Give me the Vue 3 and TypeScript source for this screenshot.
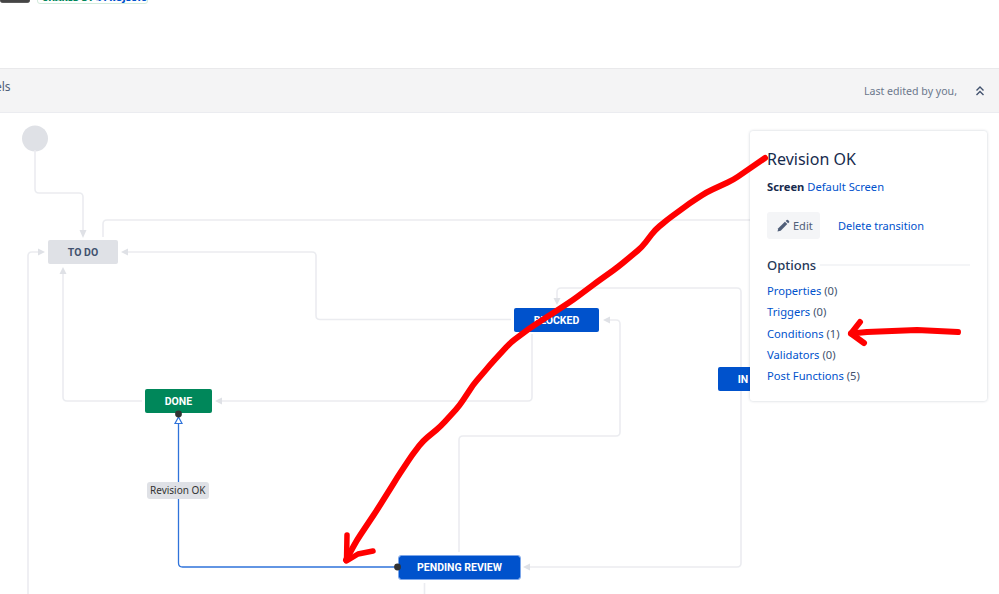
<script setup lang="ts">
type Pt = [number, number]

interface FlowNode {
  label: string
  kind: string
  x: number
  y: number
  w: number
  h: number
}

const CANVAS_TOP = 113

const nodes: FlowNode[] = [
  { label: 'TO DO', kind: 'todo', x: 48, y: 240, w: 70, h: 24 },
  { label: 'DONE', kind: 'done', x: 145, y: 389, w: 67, h: 24 },
  { label: 'BLOCKED', kind: 'progress', x: 514, y: 308, w: 85, h: 24 },
  { label: 'IN PROGRESS', kind: 'progress', x: 718, y: 367, w: 106, h: 24 },
  { label: 'PENDING REVIEW', kind: 'progress selected', x: 399, y: 556, w: 121, h: 23 },
]

const edgeLines: Pt[][] = [
  [[35, 150], [35, 193], [83, 193], [83, 231]],
  [[103, 237], [103, 220], [760, 220]],
  [[28, 600], [28, 252], [39, 252]],
  [[128, 252], [316, 252], [316, 319.5], [511, 319.5]],
  [[63, 273], [63, 401], [142, 401]],
  [[221, 401], [532, 401], [532, 334]],
  [[557, 299], [557, 288], [741, 288], [741, 567], [530, 567]],
  [[609, 320], [620, 320], [620, 436], [459, 436], [459, 552]],
  [[424.5, 583], [424.5, 600]],
]

const arrows: string[] = [
  '83,238 79.5,230 86.5,230',
  '45,252 38,248.5 38,255.5',
  '121,252 128,248.5 128,255.5',
  '63,267 59.5,274 66.5,274',
  '215,401 222,397.5 222,404.5',
  '557,305 553.5,298 560.5,298',
  '603,320 610,316.5 610,323.5',
  '523,567 530,563.5 530,570.5',
]

const optionRows = [
  { name: 'Properties', count: 0 },
  { name: 'Triggers', count: 0 },
  { name: 'Conditions', count: 1 },
  { name: 'Validators', count: 0 },
  { name: 'Post Functions', count: 5 },
]

const scribble: Pt[] = [
  [765, 158], [733, 180], [707, 192], [690, 203], [667, 220], [655, 230], [642, 247],
  [618, 267], [597, 282], [573, 300], [547, 317], [530, 328], [510, 343], [490, 365],
  [473, 385], [460, 405], [441, 426], [423, 441], [412, 455], [397, 478], [377, 510],
  [357, 540], [346, 560],
]

function rounded(points: Pt[], r = 4): string {
  let d = `M${points[0][0]} ${points[0][1]}`
  for (let i = 1; i < points.length - 1; i++) {
    const [px, py] = points[i - 1]
    const [x, y] = points[i]
    const [nx, ny] = points[i + 1]
    const inLen = Math.hypot(x - px, y - py) || 1
    const outLen = Math.hypot(nx - x, ny - y) || 1
    const ax = x - ((x - px) / inLen) * r
    const ay = y - ((y - py) / inLen) * r
    const bx = x + ((nx - x) / outLen) * r
    const by = y + ((ny - y) / outLen) * r
    d += ` L${ax} ${ay} Q${x} ${y} ${bx} ${by}`
  }
  const last = points[points.length - 1]
  return `${d} L${last[0]} ${last[1]}`
}

const edgePaths = edgeLines.map((line) => rounded(line))
const selectedPath = rounded([[398, 567], [178.5, 567], [178.5, 423]])
const scribblePath = rounded(scribble, 6)

function nodeBox(node: FlowNode) {
  return {
    left: `${node.x}px`,
    top: `${node.y - CANVAS_TOP}px`,
    width: `${node.w}px`,
    height: `${node.h}px`,
  }
}
</script>

<template>
  <div class="page">
    <div class="top">
      <span class="lozenge dark">ACTIVE</span>
      <span class="lozenge shared"><b class="green">SHARED BY</b>&nbsp;<b class="blue">4 PROJECTS</b></span>
    </div>

    <header class="bar">
      <span class="bar-left">els</span>
      <div class="bar-right">
        <span>Last edited by you,</span>
        <svg class="chev" width="12" height="12" viewBox="0 0 12 12" fill="none" stroke="#42526e" stroke-width="1.4">
          <path d="M2.5 5.5 6 2l3.5 3.5" />
          <path d="M2.5 10 6 6.5 9.5 10" />
        </svg>
      </div>
    </header>

    <main class="canvas">
      <svg class="graph" width="999" height="481" viewBox="0 113 999 481" fill="none">
        <circle cx="35" cy="138.5" r="13" fill="#dfe1e6" />
        <path v-for="(d, i) in edgePaths" :key="i" :d="d" stroke="#ebecf0" stroke-width="1.6" />
        <polygon v-for="p in arrows" :key="p" :points="p" fill="#dfe1e6" />
        <path :d="selectedPath" stroke="#2f73da" stroke-width="1.3" />
      </svg>

      <div
        v-for="node in nodes"
        :key="node.label"
        class="node"
        :class="node.kind"
        :style="nodeBox(node)"
      >{{ node.label }}</div>

      <svg class="graph over" width="999" height="481" viewBox="0 113 999 481" fill="none">
        <polygon points="178.5,417 175,423.5 182,423.5" fill="#fff" stroke="#2f73da" stroke-width="1.2" />
        <circle cx="178.5" cy="414" r="3.4" fill="#333" />
        <circle cx="397.5" cy="567" r="3.4" fill="#333" />
      </svg>

      <span class="edge-label">Revision OK</span>

      <aside class="panel">
        <h2 class="title">Revision OK</h2>
        <p class="screen"><b>Screen</b> <a>Default Screen</a></p>
        <div class="actions">
          <button class="edit" type="button">
            <svg width="14" height="14" viewBox="0 0 14 14" fill="#505f79">
              <path d="M1.5 12.5l.8-3.2 6.6-6.6 2.4 2.4-6.6 6.6z" />
              <path d="M9.7 1.9l.9-.9a1 1 0 0 1 1.4 0l1 1a1 1 0 0 1 0 1.4l-.9.9z" />
            </svg>
            Edit
          </button>
          <a class="delete">Delete transition</a>
        </div>
        <div class="options-head">
          <span>Options</span>
          <i class="rule"></i>
        </div>
        <ul class="options">
          <li v-for="row in optionRows" :key="row.name"><a>{{ row.name }}</a> ({{ row.count }})</li>
        </ul>
      </aside>
    </main>

    <svg class="ink" width="999" height="594" viewBox="0 0 999 594" fill="none" stroke="#ff0000" stroke-linecap="round" stroke-linejoin="round">
      <path :d="scribblePath" stroke-width="6" />
      <path d="M347 535 346.5 561 358 554 373 551" stroke-width="5.5" />
      <path d="M958 332 917 330 867 332 851 333.5" stroke-width="6" />
      <path d="M860 322 851 333.5 864 343" stroke-width="6" />
    </svg>
  </div>
</template>

<style scoped>
.page {
  position: relative;
  width: 999px;
  height: 594px;
  overflow: hidden;
  display: flex;
  flex-direction: column;
  background: #fff;
  font-family: "Noto Sans", "Open Sans", sans-serif;
  font-size: 12px;
  color: #42526e;
}

.top {
  height: 68px;
  flex: none;
  display: flex;
  align-items: flex-start;
  gap: 7px;
}

.lozenge {
  box-sizing: border-box;
  display: flex;
  align-items: flex-end;
  border-radius: 3px;
  font-size: 9px;
  font-weight: 700;
  line-height: 10px;
  white-space: nowrap;
  overflow: hidden;
}

.dark {
  width: 30px;
  height: 18px;
  margin-top: -15px;
  padding: 0 0 0 2px;
  background: #454545;
  color: #fff;
  border-bottom: 1px solid #5b5b5b;
}

.shared {
  width: 111px;
  height: 18px;
  margin-top: -14px;
  padding: 0 0 0 5px;
  border: 1.5px solid #d3ebdc;
}

.green {
  color: #00875a;
}

.blue {
  color: #0052cc;
}

.bar {
  height: 45px;
  flex: none;
  box-sizing: border-box;
  display: flex;
  justify-content: space-between;
  background: #f4f4f5;
  border-top: 1px solid #e9e9eb;
  border-bottom: 1px solid #ebecf0;
}

.bar-left {
  margin: 10px 0 0 -5px;
  line-height: 16px;
  color: #505f79;
}

.bar-right {
  display: flex;
  align-items: center;
  gap: 17px;
  padding: 0 13px 0 0;
  margin-top: 1px;
  font-size: 10.6px;
  color: #6b778c;
}

.chev {
  display: block;
}

.canvas {
  position: relative;
  flex: 1;
}

.graph {
  position: absolute;
  left: 0;
  top: 0;
}

.node {
  position: absolute;
  box-sizing: border-box;
  display: flex;
  align-items: center;
  justify-content: center;
  border-radius: 2px;
  font-family: Roboto, "Noto Sans", sans-serif;
  font-size: 10.5px;
  font-weight: 700;
  white-space: nowrap;
  overflow: hidden;
}

.todo {
  background: #dfe1e6;
  color: #42526e;
}

.done {
  background: #00875a;
  color: #fff;
}

.progress {
  background: #0052cc;
  color: #fff;
}

.selected {
  outline: 1px solid #7da7ea;
}

.edge-label {
  position: absolute;
  left: 147px;
  top: 369px;
  height: 17px;
  padding: 0 3px;
  border-radius: 3px;
  background: #dfe1e6;
  font-size: 10px;
  line-height: 17px;
  color: #333;
  white-space: nowrap;
}

.panel {
  position: absolute;
  left: 750px;
  top: 18px;
  width: 237px;
  height: 270px;
  box-sizing: border-box;
  padding: 17px 17px 0;
  background: #fff;
  border-radius: 3px;
  box-shadow: 0 0 3px rgba(9, 30, 66, 0.22);
}

.title {
  margin: 0;
  font-size: 16px;
  font-weight: 400;
  line-height: 22px;
  color: #172b4d;
}

.screen {
  margin: 9px 0 0;
  font-size: 11.2px;
  line-height: 16px;
}

.screen b {
  color: #172b4d;
}

a {
  color: #0052cc;
}

.actions {
  display: flex;
  align-items: center;
  gap: 18px;
  margin-top: 17px;
  font-size: 11px;
}

.edit {
  display: flex;
  align-items: center;
  gap: 3px;
  width: 53px;
  height: 27px;
  padding: 0 0 0 9px;
  border: 0;
  border-radius: 3px;
  background: #f4f5f7;
  font: inherit;
  color: #505f79;
}

.options-head {
  display: flex;
  align-items: center;
  gap: 4px;
  margin-top: 16px;
  font-size: 13px;
  font-weight: 500;
  line-height: 20px;
  color: #253858;
}

.rule {
  flex: 1;
  height: 2px;
  background: #f4f5f7;
}

.options {
  list-style: none;
  margin: 5px 0 0;
  padding: 0;
  font-size: 11.2px;
  line-height: 21.3px;
}

.ink {
  position: absolute;
  left: 0;
  top: 0;
  pointer-events: none;
}
</style>

<style>
html,
body {
  margin: 0;
  overflow: hidden;
}
</style>
